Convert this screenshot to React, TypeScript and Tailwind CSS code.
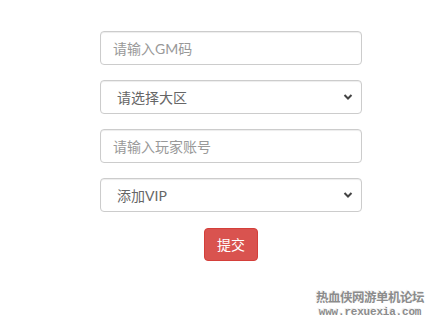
import { useState } from 'react';

const font = { fontFamily: 'Lato, "Noto Sans CJK SC", sans-serif' };

function Chevron() {
    return (
        <svg
            className="pointer-events-none absolute right-[9px] top-1/2 -translate-y-1/2"
            width="10"
            height="7"
            viewBox="0 0 10 7"
        >
            <path d="M1.5 1.5 L5 5 L8.5 1.5" fill="none" stroke="#444" strokeWidth="2" />
        </svg>
    );
}

function App() {
    const [gm, setGm] = useState('');
    const [account, setAccount] = useState('');
    const [area, setArea] = useState('');
    const [vip, setVip] = useState('');

    const field =
        'block h-[34px] w-full rounded-[4px] border border-[#ccc] bg-white px-3 text-[14px] text-[#666] shadow-[inset_0_1px_1px_rgba(0,0,0,0.075)] outline-none placeholder:text-[#999]';

    return (
        <div className="relative h-[327px] w-[435px] bg-white" style={font}>
            <form className="ml-[100px] flex w-[262px] flex-col gap-[15px] pt-[31px]">
                <input
                    className={field}
                    placeholder="请输入GM码"
                    value={gm}
                    onChange={(e) => setGm(e.target.value)}
                />
                <div className="relative">
                    <select
                        className={`${field} appearance-none pl-[16px]`}
                        value={area}
                        onChange={(e) => setArea(e.target.value)}
                    >
                        <option value="">请选择大区</option>
                    </select>
                    <Chevron />
                </div>
                <input
                    className={field}
                    placeholder="请输入玩家账号"
                    value={account}
                    onChange={(e) => setAccount(e.target.value)}
                />
                <div className="relative">
                    <select
                        className={`${field} appearance-none pl-[16px]`}
                        value={vip}
                        onChange={(e) => setVip(e.target.value)}
                    >
                        <option value="">添加VIP</option>
                    </select>
                    <Chevron />
                </div>
                <div className="flex justify-center pt-[1px]">
                    <button
                        type="button"
                        className="h-[33px] rounded-[4px] border border-[#d43f3a] bg-[#d9534f] px-3 text-[14px] text-white"
                    >
                        提交
                    </button>
                </div>
            </form>

            {/* watermark */}
            <div className="absolute right-[10px] top-[290px] flex w-[110px] flex-col items-center text-[#8c8c8c] [text-shadow:1px_1px_0_#fff,-1px_-1px_0_#eee]">
                <span className="text-[12.5px] font-bold leading-[16px] tracking-[-0.5px]">热血侠网游单机论坛</span>
                <span
                    className="text-[11px] font-bold leading-[13px] tracking-[-0.2px]"
                    style={{ fontFamily: '"Liberation Mono", monospace' }}
                >
                    www.rexuexia.com
                </span>
            </div>
        </div>
    );
}

export default App;
